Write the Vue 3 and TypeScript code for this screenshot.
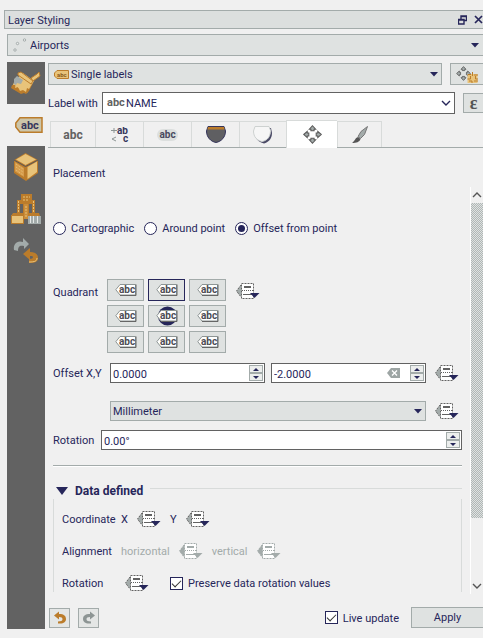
<script setup lang="ts">
import { ref } from 'vue'

const tabs = ['text', 'format', 'buffer', 'background', 'shadow', 'placement', 'callout']
const tabNames = ['Text', 'Formatting', 'Buffer', 'Background', 'Shadow', 'Placement', 'Rendering']
const activeTab = ref('placement')

const modes = ['Cartographic', 'Around point', 'Offset from point']
const mode = ref('Offset from point')

const quadrant = ref(1)
const offsetX = ref('0.0000')
const offsetY = ref('-2.0000')
const rotation = ref('0.00°')
const preserve = ref(true)
const live = ref(true)

function stepped(value: string, delta: number, digits: number): string {
  return (parseFloat(value) + delta).toFixed(digits)
}
function stepX(d: number) {
  offsetX.value = stepped(offsetX.value, d, 4)
}
function stepY(d: number) {
  offsetY.value = stepped(offsetY.value || '0', d, 4)
}
function stepRotation(d: number) {
  rotation.value = stepped(rotation.value, d, 2) + '°'
}
</script>

<template>
  <div class="panel">
    <svg class="defs" aria-hidden="true">
      <symbol id="dd" viewBox="0 0 24 18">
        <path d="M5.5 1.500h12v15h-12L.5 9z" fill="#fff" />
        <path d="M5.500 2.500v13L.5 9z" fill="#a3abaa" />
        <path d="M5.500 1.500h12v15h-12z" fill="none" stroke="currentColor" stroke-dasharray="2 1" />
        <path d="M5 3L.5 9 5 15" fill="none" stroke="currentColor" stroke-dasharray="2 1" />
        <path d="M8 5h7" stroke="currentColor" stroke-width="2" />
        <path d="M6 8.500h11" stroke="currentColor" stroke-dasharray="1 1" />
        <path d="M7 12.500h9" stroke="currentColor" />
        <path d="M14 11h9.500l-5 5z" style="fill: var(--arrow)" />
      </symbol>
      <symbol id="move" viewBox="0 0 18 18">
        <g fill="#a3abaa" stroke="#5a5a5a" stroke-width="1">
          <path d="M9 .7l3 3.300h-1.500v1.500h-3V4H6z" />
          <path d="M9 17.300l3-3.300h-1.500v-1.500h-3V14H6z" />
          <path d="M.7 9L4 6v1.500h1.500v3H4V12z" />
          <path d="M17.300 9L14 6v1.500h-1.500v3H14V12z" />
        </g>
      </symbol>
      <symbol id="undo" viewBox="0 0 14 13">
        <path d="M1 4.500L6 .5v2.500c5 0 7 2 7 5 0 2.500-2 4.500-6 4.500H5v-2c3 0 4.500-.8 4.500-2.200S8.500 6 6 6v2.500z" fill="currentColor" />
      </symbol>
      <symbol id="down" viewBox="0 0 8 5">
        <path d="M0 0h8L4 4.500z" fill="#26265a" />
      </symbol>
      <symbol id="chev" viewBox="0 0 10 6">
        <path d="M1 1l4 4 4-4" fill="none" stroke="currentColor" stroke-width="1.400" />
      </symbol>
    </svg>

    <header class="titlebar">
      <h1>Layer Styling</h1>
      <button class="plain" aria-label="Float">
        <svg width="9" height="10" viewBox="0 0 9 10"><path d="M3 4V1h5.500v4.500H6M2.500 1.500h6M.5 4.500H6v4.500H.5zM.5 5H6" fill="none" stroke="#26265a" stroke-width="1.400" /></svg>
      </button>
      <button class="plain" aria-label="Close">
        <svg width="9" height="9" viewBox="0 0 9 9"><path d="M1 1l7 7M8 1L1 8" stroke="#26265a" stroke-width="1.700" /></svg>
      </button>
    </header>

    <div class="combo layer">
      <svg class="lead" width="14" height="14" viewBox="0 0 14 14" fill="#eee" stroke="#a3abaa"><circle cx="11.500" cy="2" r="1.200" /><circle cx="4.500" cy="5.500" r="1.200" /><circle cx="2" cy="12" r="1.200" /></svg>
      <select aria-label="Layer"><option>Airports</option></select>
      <svg class="arrow" width="8" height="5"><use href="#down" /></svg>
    </div>

    <div class="body">
      <nav class="side" aria-label="Styling pages">
        <button aria-label="Symbology">
          <svg width="30" height="24" viewBox="0 0 30 24">
            <path d="M4 9l8-7 11 8-7 12-5-1-10-5z" fill="#e8c37a" />
            <path d="M1 14l3 0 5 4 7-2 6-4-4 8-3 3-2-1-3 1-10-6z" fill="#bb7c2b" />
            <path d="M5 11l8-3 9 3-4 7-2-1-1 4-3-2-3 1-2-4-3 1z" fill="#e8c37a" />
            <path d="M7 2l3-1 12 9-2 3L7 4z" fill="#e8c37a" stroke="#bb7c2b" />
            <path d="M20 7l6-4 2-2 1 4-7 5z" fill="#e8c37a" stroke="#bb7c2b" />
            <path d="M3 8l3-3 6 4-2 4-4-1-1 2-2-1z" fill="#a3abaa" />
          </svg>
        </button>
        <button class="current" aria-label="Labels">
          <svg width="28" height="16" viewBox="0 0 28 16">
            <path d="M5 .8h22v14.400H5L.8 10V6z" fill="#ccc5a9" stroke="#bb7c2b" stroke-width="1.500" />
            <text x="6" y="12" font-size="11" font-weight="700" fill="#36365c">abc</text>
          </svg>
        </button>
        <button aria-label="3D view">
          <svg width="26" height="30" viewBox="0 0 26 30">
            <path d="M12.500 1L1 8v13l12 8 12-8V8z" fill="#bb7c2b" />
            <path d="M12.500 2L3 7.500l9.500 5.500L23 7.500z" fill="#e8c37a" />
            <path d="M1 8l11.500 6.500L25 8" fill="none" stroke="#55555a" />
            <path d="M14.500 15L24 9.500V20l-9.500 7z" fill="#e8c37a" />
            <path d="M2 10l9 6v9l-9-5.500z" fill="#d69c4c" />
            <path d="M3 12l7 5M3 15l7 5M3 18l7 5" stroke="#e8c37a" stroke-dasharray="1 1" />
          </svg>
        </button>
        <button aria-label="Diagrams">
          <svg width="30" height="30" viewBox="0 0 30 30">
            <path d="M10 0h11v6h3v13h4l1 3H0l2-3h4V6h4z" fill="#bb7c2b" />
            <path d="M9 10h3v9H9zM18 10h3v9h-3z" fill="#626262" />
            <path d="M13 10h4v15h-4z" fill="#c98c3a" />
            <path d="M7.500 7v12M22.500 7v12M15 12v12M12 3h7M12 6h5" stroke="#e8c37a" stroke-dasharray="2 1" />
            <path d="M.5 21.500h12v8H.5z" fill="#e8c37a" stroke="#bb7c2b" />
            <path d="M17 22h13v8H17z" fill="#a3abaa" />
            <path d="M19.500 22v7M22.500 22v7M26.500 22v7" stroke="#e5e8e7" />
          </svg>
        </button>
        <button aria-label="History">
          <svg width="26" height="26" viewBox="0 0 26 26">
            <path d="M1 12C0 6 4 2 10 4V0l6 6-5 5V8C7 7 5 8 5 13z" fill="#a3abaa" />
            <path d="M10 16l7-6v4c5 0 8 2 8 6s-3 5-9 5v-4c3 0 4-1 4-2s-1-1-3-1v4z" fill="#bb7c2b" />
            <path d="M16 24c6 0 8-1 8-4" fill="none" stroke="#e8c37a" />
          </svg>
        </button>
      </nav>

      <main class="main">
        <div class="row top">
          <div class="combo grow">
            <svg class="lead" width="15" height="9" viewBox="0 0 15 9"><path d="M3 .5h11.500v8H3L.5 6V3z" fill="#e8c37a" stroke="#bb7c2b" /><text x="3" y="7" font-size="6" font-weight="700" fill="#8a5a20">abc</text></svg>
            <select aria-label="Label mode"><option>Single labels</option></select>
            <svg class="arrow" width="8" height="5"><use href="#down" /></svg>
          </div>
          <button class="cut engine" aria-label="Placement engine settings">
            <svg width="22" height="17" viewBox="0 0 22 17"><use href="#move" width="15" height="15" /><path d="M11.500 8h10v9h-10z" fill="#e8c37a" /><path d="M16.500 6v4M12 8.500h3M18 9h4M14.500 10v3h-3M19.500 10v3h2.500M13 15h3v2M18 15h4" fill="none" stroke="#bb7c2b" /></svg>
          </button>
        </div>

        <div class="row with">
          <label for="field">Label with</label>
          <div class="combo white grow">
            <span class="lead abc">abc</span>
            <select id="field"><option>NAME</option></select>
            <svg class="arrow" width="10" height="6"><use href="#chev" /></svg>
          </div>
          <button class="cut eps" aria-label="Expression">ε</button>
        </div>

        <div class="tabs" role="tablist">
          <button v-for="(t, i) in tabs" :key="t" role="tab" :class="['tab', t, { active: activeTab === t }]" :aria-selected="activeTab === t" :aria-label="tabNames[i]" @click="activeTab = t">
            <span v-if="t === 'text'" class="glyph">abc</span>
            <svg v-else-if="t === 'format'" width="20" height="16" viewBox="0 0 20 16"><path d="M4 1v5M1 3.500h6M6 10l-4 2 4 2" fill="none" stroke="#8d9594" /><text x="7" y="7" font-size="10" font-weight="700" fill="#36365c">ab</text><text x="13" y="15" font-size="10" font-weight="700" fill="#36365c">c</text></svg>
            <span v-else-if="t === 'buffer'" class="glyph halo">abc</span>
            <svg v-else-if="t === 'background'" width="20" height="17" viewBox="0 0 20 17"><path d="M2 .5h16l1.500 4.500c0 6-4 10.500-9.500 11.500C4.500 15.500.5 11 .5 5z" fill="#5f5f62" stroke="#36365c" /><path d="M2 1h16l.5 2.500h-17z" fill="#bb7c2b" /></svg>
            <svg v-else-if="t === 'shadow'" width="20" height="18" viewBox="0 0 20 18"><path d="M4 2h14l1 5c0 6-4 9.500-8 10.500-4-1-7-3-8-6z" fill="#4a4a66" /><path d="M2 .5h14l1.500 4c0 6-3 10-8.500 11C4 14.500.5 11 .5 5z" fill="#f6f6f6" stroke="#cdd1d0" /></svg>
            <svg v-else-if="t === 'placement'" width="19" height="19"><use href="#move" /></svg>
            <svg v-else width="18" height="18" viewBox="0 0 18 18"><path d="M16.500.5l-3 8-4 4-2.500-2 3-5z" fill="#a3abaa" stroke="#777" /><path d="M7 11l2.500 2c-1 3-4 4-8.500 4 3-2 3-5 6-6z" fill="#555" /></svg>
          </button>
        </div>

        <div class="page">
          <form class="content" @submit.prevent>
            <h2>Placement</h2>

            <div class="modes" role="radiogroup" aria-label="Mode">
              <label v-for="m in modes" :key="m"><input v-model="mode" type="radio" name="mode" :value="m" /><span>{{ m }}</span></label>
            </div>

            <div class="quad">
              <span class="quad-label">Quadrant</span>
              <div class="grid">
                <button v-for="n in 9" :key="n" type="button" :class="{ on: quadrant === n - 1 }" :aria-label="'Quadrant ' + n" @click="quadrant = n - 1">
                  <svg width="22" height="20" viewBox="0 0 22 20">
                    <circle v-if="n === 5" cx="11.500" cy="10" r="9.500" fill="#26265a" />
                    <path d="M5 4.500h15.500v10.500H5L.8 9.700z" fill="#fff" stroke="#8d9594" />
                    <path d="M5 15.500h16v-11" fill="none" stroke="#666" />
                    <text x="4" y="13" font-size="10" font-weight="700" fill="#4c4c54">abc</text>
                  </svg>
                </button>
              </div>
              <button type="button" class="plain dd" aria-label="Data defined quadrant"><svg width="24" height="18"><use href="#dd" /></svg></button>
            </div>

            <div class="row offset">
              <label for="ox">Offset X,Y</label>
              <div class="spin">
                <input id="ox" v-model="offsetX" type="text" />
                <span class="steps"><button type="button" aria-label="Increase X" @click="stepX(1)" /><button type="button" class="dn" aria-label="Decrease X" @click="stepX(-1)" /></span>
              </div>
              <div class="spin">
                <input v-model="offsetY" type="text" aria-label="Offset Y" />
                <button type="button" class="plain clear" aria-label="Clear" @click="offsetY = '0.0000'">
                  <svg width="13" height="10" viewBox="0 0 13 10"><path d="M4 0h9v10H4L0 5z" fill="#9da5a4" /><path d="M5 2.500l5 5M10 2.500l-5 5" stroke="#fff" stroke-width="1.300" /></svg>
                </button>
                <span class="steps"><button type="button" aria-label="Increase Y" @click="stepY(1)" /><button type="button" class="dn" aria-label="Decrease Y" @click="stepY(-1)" /></span>
              </div>
              <button type="button" class="plain dd" aria-label="Data defined offset"><svg width="24" height="18"><use href="#dd" /></svg></button>
            </div>

            <div class="row unit">
              <div class="combo small grow">
                <select aria-label="Offset unit"><option>Millimeter</option></select>
                <svg class="arrow" width="8" height="5"><use href="#down" /></svg>
              </div>
              <button type="button" class="plain dd" aria-label="Data defined unit"><svg width="24" height="18"><use href="#dd" /></svg></button>
            </div>

            <div class="row rotation">
              <label for="rot">Rotation</label>
              <div class="spin">
                <input id="rot" v-model="rotation" type="text" />
                <span class="steps"><button type="button" aria-label="Rotate more" @click="stepRotation(1)" /><button type="button" class="dn" aria-label="Rotate less" @click="stepRotation(-1)" /></span>
              </div>
            </div>

            <hr />

            <section class="group">
              <h2><svg width="12" height="8" viewBox="0 0 12 8"><path d="M0 0h12L6 8z" fill="#26265a" /></svg>Data defined</h2>
              <div class="fields">
                <div class="line">
                  <span class="name">Coordinate</span><span>X</span>
                  <button type="button" class="plain dd" aria-label="Data defined X"><svg width="24" height="18"><use href="#dd" /></svg></button>
                  <span>Y</span>
                  <button type="button" class="plain dd" aria-label="Data defined Y"><svg width="24" height="18"><use href="#dd" /></svg></button>
                </div>
                <div class="line">
                  <span class="name">Alignment</span><span class="off">horizontal</span>
                  <button type="button" class="plain dd off" disabled aria-label="Data defined horizontal alignment"><svg width="24" height="18"><use href="#dd" /></svg></button>
                  <span class="off">vertical</span>
                  <button type="button" class="plain dd off" disabled aria-label="Data defined vertical alignment"><svg width="24" height="18"><use href="#dd" /></svg></button>
                </div>
                <div class="line">
                  <span class="name">Rotation</span>
                  <button type="button" class="plain dd wide" aria-label="Data defined rotation"><svg width="24" height="18"><use href="#dd" /></svg></button>
                  <label class="check"><input v-model="preserve" type="checkbox" /><span>Preserve data rotation values</span></label>
                </div>
              </div>
            </section>
          </form>

          <div class="scroll">
            <button class="plain up" aria-label="Scroll up"><svg width="10" height="6"><use href="#chev" /></svg></button>
            <div class="track"><div class="thumb" /></div>
            <button class="plain" aria-label="Scroll down"><svg width="10" height="6"><use href="#chev" /></svg></button>
          </div>
        </div>

        <footer class="foot">
          <button class="tool" aria-label="Undo"><svg class="amber" width="14" height="13"><use href="#undo" /></svg></button>
          <button class="tool" aria-label="Redo"><svg class="redo" width="14" height="13"><use href="#undo" /></svg></button>
          <label class="check"><input v-model="live" type="checkbox" /><span>Live update</span></label>
          <button class="cut apply">Apply</button>
        </footer>
      </main>
    </div>
  </div>
</template>

<style>
body {
  background: #f0f0f0;
}
</style>

<style scoped>
.panel {
  --arrow: #26265a;
  box-sizing: border-box;
  display: flex;
  flex-direction: column;
  min-height: 100vh;
  padding: 10px 0 9px 4px;
  overflow: hidden;
  background: #f0f0f0;
  color: #26265a;
  font: 11px/16px Roboto, "Liberation Sans", sans-serif;
}
.panel * {
  box-sizing: border-box;
}
.defs {
  position: absolute;
  width: 0;
  height: 0;
}
svg {
  display: block;
  flex: none;
}
button,
input,
select {
  margin: 0;
  color: inherit;
  font: inherit;
}
button {
  display: flex;
  align-items: center;
  justify-content: center;
  padding: 0;
}
h1,
h2 {
  margin: 0;
  font: inherit;
}
.plain {
  border: 0;
  background: none;
}
.row {
  display: flex;
  align-items: center;
}
.row label,
.modes span,
.check span,
.line > span {
  padding-top: 2px;
}
.grow {
  flex: 1;
}

.titlebar {
  display: flex;
  align-items: center;
  gap: 7px;
  height: 19px;
  padding-left: 3px;
  border: 1px solid #a3abaa;
  border-right: 0;
  background: #dcdfde;
}
.titlebar h1 {
  flex: 1;
  padding-top: 3px;
}

.combo {
  position: relative;
  height: 22px;
}
.combo select {
  display: block;
  width: 100%;
  height: 100%;
  padding: 2px 20px 0 22px;
  border: 1px solid #a3abaa;
  border-radius: 0;
  background: #dfe2e1;
  appearance: none;
}
.lead {
  position: absolute;
  top: 0;
  bottom: 0;
  left: 6px;
  margin: auto 0;
  pointer-events: none;
}
.arrow {
  position: absolute;
  top: 0;
  right: 4px;
  bottom: 0;
  margin: auto 0;
  pointer-events: none;
}
.layer {
  margin: 5px 0 0 3px;
}
.layer select {
  border-right: 0;
}
.white select {
  padding-left: 23px;
  border-color: #626262;
  background: #fff;
}
.abc {
  left: 5px;
  height: 16px;
  color: #626262;
  font-weight: 700;
}
.small {
  height: 20px;
}
.small select {
  padding-left: 2px;
}

.body {
  display: flex;
  flex: 1;
  gap: 3px;
  margin: 6px 0 0 3px;
}
.side {
  width: 38px;
  background: #626262;
}
.side button {
  width: 38px;
  height: 42px;
  border: 0;
  background: none;
}
.side .current {
  justify-content: flex-end;
  padding-right: 2px;
  background: #f0f0f0;
}
.main {
  display: flex;
  flex: 1;
  flex-direction: column;
  min-width: 0;
}
.top {
  gap: 8px;
  padding-top: 1px;
}
.cut {
  border: 1px solid #a3abaa;
  border-right: 0;
  background: #dfe2e1;
}
.engine {
  width: 33px;
  height: 22px;
}
.with {
  padding-top: 7px;
}
.with label {
  width: 54px;
}
.eps {
  width: 20px;
  height: 20px;
  margin-left: 8px;
  color: #555;
  font: 700 18px/16px "Liberation Serif", serif;
}

.tabs {
  display: flex;
  align-items: flex-end;
  height: 34px;
  padding-left: 2px;
  border-bottom: 1px solid #a3abaa;
}
.tab {
  width: 48px;
  height: 26px;
  border: 1px solid #d8dbda;
  border-right: 0;
  border-bottom: 0;
  background: #f0f0f0;
}
.tab.text {
  width: 45px;
}
.tab.shadow {
  width: 47px;
}
.tab.active {
  width: 51px;
  height: 28px;
  margin-bottom: -1px;
  background: #fff;
}
.tab.callout {
  width: 45px;
  border-right: 1px solid #d8dbda;
}
.glyph {
  color: #626262;
  font-size: 12px;
  font-weight: 700;
}
.halo {
  padding: 0 2px;
  border-radius: 6px;
  background: #dcdfde;
  color: #4a4a60;
  font-size: 10px;
  line-height: 12px;
}

.page {
  display: flex;
  flex: 1;
  padding-top: 18px;
}
.content {
  display: flex;
  flex: 1;
  flex-direction: column;
  min-width: 0;
  padding: 0 8px 0 5px;
}
.modes {
  display: flex;
  gap: 10px;
  margin-top: 37px;
}
.modes label,
.check {
  display: flex;
  align-items: center;
  gap: 5px;
}
input[type="radio"],
input[type="checkbox"] {
  display: grid;
  flex: none;
  place-content: center;
  width: 13px;
  height: 13px;
  border: 1px solid #26265a;
  background: #fff;
  appearance: none;
}
input[type="radio"] {
  border-radius: 50%;
}
input[type="radio"]:checked::before {
  width: 7px;
  height: 7px;
  border-radius: 50%;
  background: #26265a;
  content: "";
}
input[type="checkbox"]:checked::before {
  width: 8px;
  height: 4px;
  margin-top: -2px;
  border: solid #333;
  border-width: 0 0 1px 1px;
  transform: rotate(-45deg);
  content: "";
}

.quad {
  display: flex;
  margin-top: 42px;
}
.quad-label {
  width: 54px;
  padding-top: 6px;
}
.grid {
  display: grid;
  grid-template-columns: repeat(3, 37px);
  gap: 4px;
}
.grid button {
  height: 22px;
  border: 1px solid #a3abaa;
  background: #dfe2e1;
}
.grid .on {
  border-color: #26265a;
}
.dd {
  width: 24px;
  height: 18px;
  color: #626262;
}
.quad .dd {
  margin: 3px 0 0 10px;
}
.offset {
  gap: 6px;
  margin-top: 10px;
}
.offset label {
  width: 51px;
}
.offset .dd {
  margin-left: 3px;
}
.spin {
  display: flex;
  flex: 1;
  align-items: center;
  min-width: 0;
  height: 20px;
  padding-right: 1px;
  border: 1px solid #626262;
  background: #fff;
}
.spin input {
  flex: 1;
  min-width: 0;
  height: 18px;
  padding: 2px 2px 0;
  border: 0;
  background: none;
}
.steps {
  width: 14px;
}
.steps button {
  width: 14px;
  height: 8px;
  border: 1px solid #a3abaa;
  background: #eceeed;
}
.steps button::before {
  border: solid transparent;
  border-width: 0 3px 3px;
  border-bottom-color: #26265a;
  content: "";
}
.steps .dn::before {
  border-width: 3px 3px 0;
  border-top-color: #26265a;
}
.clear {
  margin-right: 10px;
}
.unit {
  gap: 9px;
  margin-top: 18px;
  padding-left: 57px;
}
.offset,
.unit {
  padding-right: 3px;
}
.rotation {
  margin-top: 9px;
}
.rotation label {
  width: 48px;
}
hr {
  width: 100%;
  height: 2px;
  margin: 15px 0 0;
  border: 0;
  border-top: 1px solid #a3abaa;
  background: #fff;
}
.group h2 {
  display: flex;
  align-items: center;
  gap: 7px;
  margin-top: 16px;
  padding-left: 3px;
  font-size: 12px;
  font-weight: 700;
}
.group h2::after {
  flex: 1;
  height: 1px;
  margin-bottom: 5px;
  background: #d8dbda;
  content: "";
}
.fields {
  display: flex;
  flex-direction: column;
  gap: 14px;
  padding: 11px 0 0 8px;
  border: solid #d8dbda;
  border-width: 0 1px;
}
.line {
  display: flex;
  align-items: center;
  gap: 9px;
  height: 18px;
}
.name {
  width: 50px;
}
.off {
  --arrow: #a3abaa;
  color: #a3abaa;
}
.line .wide {
  margin: 0 12px 0 4px;
}

.scroll {
  display: flex;
  flex-direction: column;
  width: 13px;
  margin-top: 21px;
  border-left: 1px solid #fff;
  color: #555;
}
.scroll button {
  width: 100%;
  height: 16px;
}
.up svg {
  transform: rotate(180deg);
}
.track {
  flex: 1;
}
.thumb {
  height: 84%;
  background: repeating-conic-gradient(#b0b7b6 0 25%, #dfe2e1 0 50%) 0 0 / 2px 2px;
}

.foot {
  display: flex;
  align-items: center;
  margin-top: 13px;
  padding: 0 0 1px 1px;
}
.tool {
  width: 21px;
  height: 20px;
  margin-right: 8px;
  border: 1px solid #a3abaa;
  background: #e4e6e5;
}
.amber {
  color: #bb7c2b;
}
.redo {
  color: #8d9594;
  transform: scaleX(-1);
}
.foot .check {
  margin: 0 12px 0 auto;
}
.apply {
  width: 72px;
  height: 21px;
}
</style>
